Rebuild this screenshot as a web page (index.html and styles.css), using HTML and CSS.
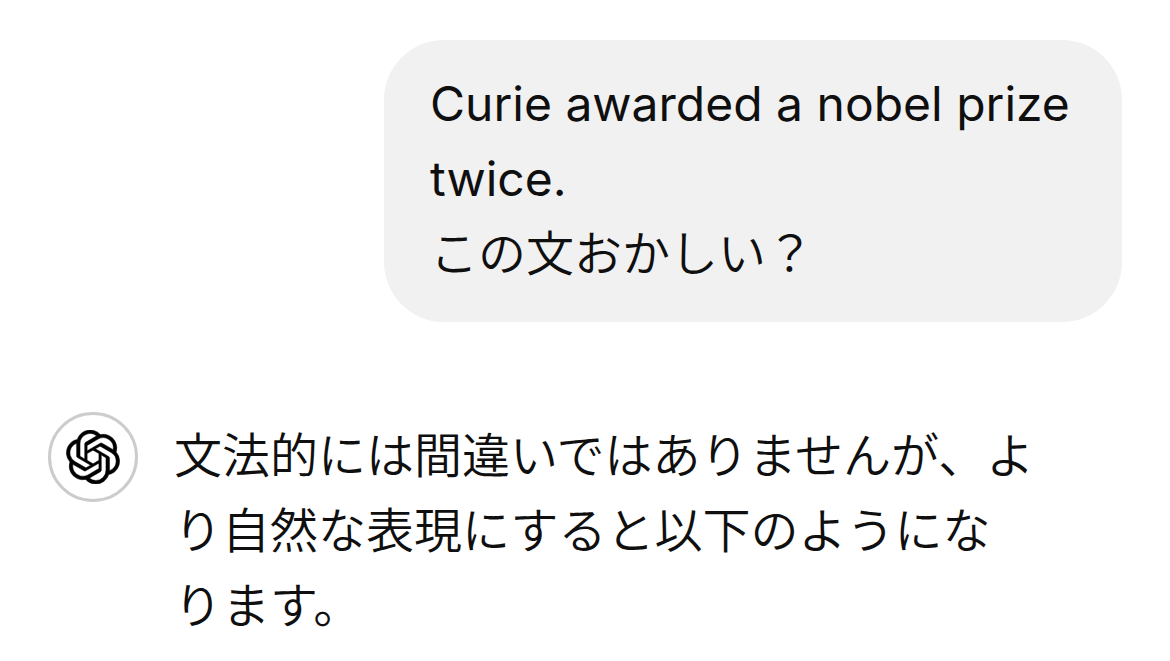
FILE: index.html
```html
<!DOCTYPE html>
<html lang="ja">
<head>
<meta charset="utf-8">
<meta name="viewport" content="width=device-width, initial-scale=1">
<title>Chat</title>
<link rel="stylesheet" href="styles.css">
</head>
<body>
<main class="chat">
  <article class="message message-user">
    <p class="bubble"><span class="sentence" lang="en">Curie awarded a nobel prize twice.</span><br>この文おかしい？</p>
  </article>
  <article class="message message-assistant">
    <div class="avatar">
      <svg class="avatar-logo" viewBox="0 0 24 24" role="img" aria-label="ChatGPT"><path d="M22.2819 9.8211a5.9847 5.9847 0 0 0-.5157-4.9108 6.0462 6.0462 0 0 0-6.5098-2.9A6.0651 6.0651 0 0 0 4.9807 4.1818a5.9847 5.9847 0 0 0-3.9977 2.9 6.0462 6.0462 0 0 0 .7427 7.0966 5.98 5.98 0 0 0 .511 4.9107 6.051 6.051 0 0 0 6.5146 2.9001A5.9847 5.9847 0 0 0 13.2599 24a6.0557 6.0557 0 0 0 5.7718-4.2058 5.9894 5.9894 0 0 0 3.9977-2.9001 6.0557 6.0557 0 0 0-.7475-7.0729zm-9.022 12.6081a4.4755 4.4755 0 0 1-2.8764-1.0408l.1419-.0804 4.7783-2.7582a.7948.7948 0 0 0 .3927-.6813v-6.7369l2.02 1.1686a.071.071 0 0 1 .038.052v5.5826a4.504 4.504 0 0 1-4.4945 4.4944zm-9.6607-4.1254a4.4708 4.4708 0 0 1-.5346-3.0137l.142.0852 4.783 2.7582a.7712.7712 0 0 0 .7806 0l5.8428-3.3685v2.3324a.0804.0804 0 0 1-.0332.0615L9.74 19.9502a4.4992 4.4992 0 0 1-6.1408-1.6464zM2.3408 7.8956a4.485 4.485 0 0 1 2.3655-1.9728V11.6a.7664.7664 0 0 0 .3879.6765l5.8144 3.3543-2.0201 1.1685a.0757.0757 0 0 1-.071 0l-4.8303-2.7865A4.504 4.504 0 0 1 2.3408 7.8956zm16.5963 3.8558L13.1038 8.364 15.1192 7.2a.0757.0757 0 0 1 .071 0l4.8303 2.7913a4.4944 4.4944 0 0 1-.6765 8.1042v-5.6772a.79.79 0 0 0-.407-.667zm2.0107-3.0231l-.142-.0852-4.7735-2.7818a.7759.7759 0 0 0-.7854 0L9.409 9.2297V6.8974a.0662.0662 0 0 1 .0284-.0615l4.8303-2.7866a4.4992 4.4992 0 0 1 6.6802 4.66zM8.3065 12.863l-2.02-1.1638a.0804.0804 0 0 1-.038-.0567V6.0742a4.4992 4.4992 0 0 1 7.3757-3.4537l-.142.0805L8.704 5.459a.7948.7948 0 0 0-.3927.6813zm1.0976-2.3654l2.602-1.4998 2.6069 1.4998v2.9994l-2.5974 1.4997-2.6067-1.4997Z"/></svg>
    </div>
    <p class="answer">文法的には間違いではありませんが、より自然な表現にすると以下のようにな<br>ります。</p>
  </article>
</main>
</body>
</html>
```
FILE: styles.css
```css
* {
  box-sizing: border-box;
}

body {
  margin: 0;
  background: #fff;
  color: #0f0f0f;
  font-family: Inter, "Noto Sans CJK JP", sans-serif;
  font-size: 48px;
  font-weight: 350;
  line-height: 75px;
}

p {
  margin: 0;
}

.chat {
  display: flex;
  flex-direction: column;
  gap: 90px;
  padding: 40px 48px 0;
}

.message {
  display: flex;
}

.message-user {
  justify-content: flex-end;
}

.bubble {
  max-width: 738px;
  padding: 26px 46px 31px;
  border-radius: 60px;
  background: #f1f1f1;
}

.sentence {
  font-weight: 400;
}

.message-assistant {
  align-items: flex-start;
  gap: 36px;
}

.avatar {
  display: flex;
  flex: none;
  align-items: center;
  justify-content: center;
  width: 90px;
  height: 90px;
  border: 3px solid #ccc;
  border-radius: 50%;
}

.avatar-logo {
  width: 54px;
  height: 54px;
  stroke: #000;
  stroke-width: 0.2;
}

.answer {
  padding: 6px 72px 0 0;
}
```
